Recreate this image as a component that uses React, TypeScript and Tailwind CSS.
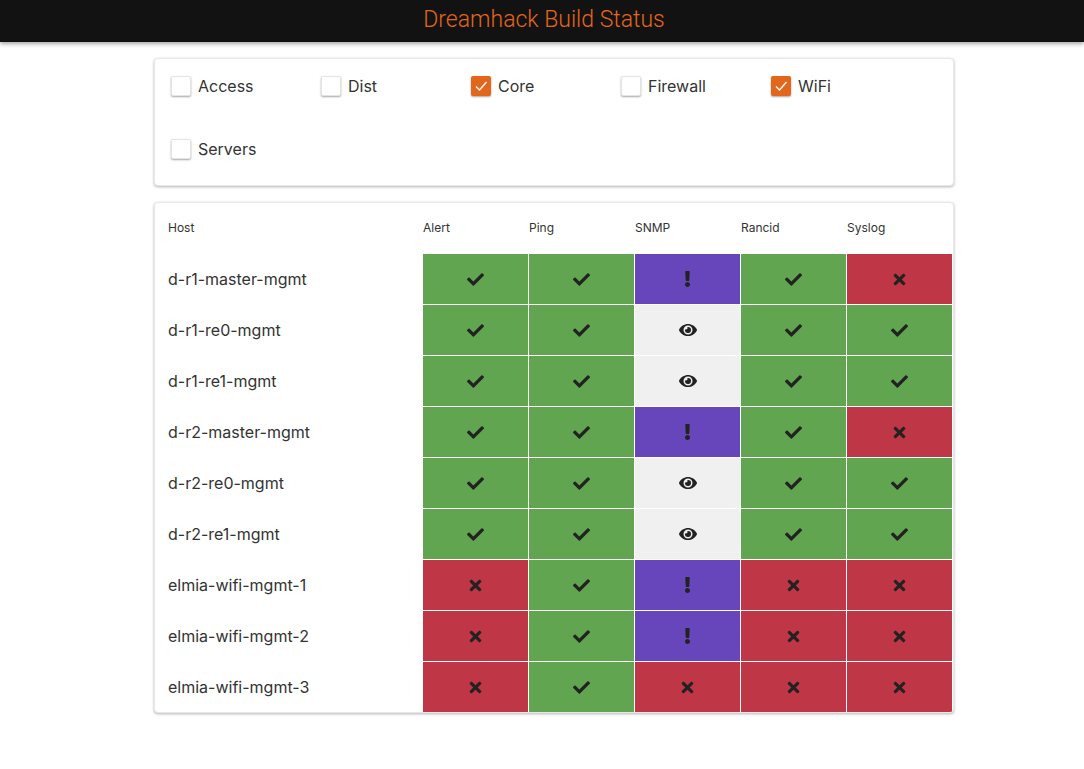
import { FaCheck, FaTimes, FaExclamation, FaEye } from 'react-icons/fa'

type Status = 'ok' | 'fail' | 'warn' | 'watch'

const hosts: { name: string; s: Status[] }[] = [
  { name: 'd-r1-master-mgmt', s: ['ok', 'ok', 'warn', 'ok', 'fail'] },
  { name: 'd-r1-re0-mgmt', s: ['ok', 'ok', 'watch', 'ok', 'ok'] },
  { name: 'd-r1-re1-mgmt', s: ['ok', 'ok', 'watch', 'ok', 'ok'] },
  { name: 'd-r2-master-mgmt', s: ['ok', 'ok', 'warn', 'ok', 'fail'] },
  { name: 'd-r2-re0-mgmt', s: ['ok', 'ok', 'watch', 'ok', 'ok'] },
  { name: 'd-r2-re1-mgmt', s: ['ok', 'ok', 'watch', 'ok', 'ok'] },
  { name: 'elmia-wifi-mgmt-1', s: ['fail', 'ok', 'warn', 'fail', 'fail'] },
  { name: 'elmia-wifi-mgmt-2', s: ['fail', 'ok', 'warn', 'fail', 'fail'] },
  { name: 'elmia-wifi-mgmt-3', s: ['fail', 'ok', 'fail', 'fail', 'fail'] },
]

const filters = [
  { label: 'Access', on: false },
  { label: 'Dist', on: false },
  { label: 'Core', on: true },
  { label: 'Firewall', on: false },
  { label: 'WiFi', on: true },
  { label: 'Servers', on: false },
]

const cellBg: Record<Status, string> = {
  ok: 'bg-[#62a550]',
  fail: 'bg-[#bf3646]',
  warn: 'bg-[#6746bb]',
  watch: 'bg-[#f0f0f0]',
}

const StatusIcon = ({ s }: { s: Status }) => {
  if (s === 'ok') return <FaCheck className="w-[17px] h-[17px] text-[#222]" />
  if (s === 'fail') return <FaTimes className="w-[17px] h-[17px] text-[#222]" />
  if (s === 'warn') return <FaExclamation className="w-[15px] h-[16px] text-[#222]" />
  return <FaEye className="w-[18px] h-[18px] text-[#222]" />
}

const Checkbox = ({ on }: { on: boolean }) => (
  <span
    className={`w-[20px] h-[20px] rounded-[2px] flex items-center justify-center shadow-[0_1px_2px_rgba(0,0,0,0.35)] ${
      on ? 'bg-[#e2661c]' : 'bg-white border border-[#e4e4e4]'
    }`}
  >
    {on && (
      <svg width="14" height="12" viewBox="0 0 14 12" fill="none">
        <path d="M2 6.5 L5.5 10 L12.5 2" stroke="white" strokeWidth="1.4" />
      </svg>
    )}
  </span>
)

export default function App() {
  return (
    <div className="min-h-screen bg-white font-['Inter',sans-serif] text-[#222]">
      {/* Header */}
      <header className="h-[42px] bg-[#121212] flex items-center justify-center shadow-[0_2px_4px_rgba(0,0,0,0.35)]">
        <h1 className="font-['Roboto',sans-serif] font-light text-[23px] text-[#e2661c] pl-[4px] -mt-[2px]">
          Dreamhack Build Status
        </h1>
      </header>

      <main className="w-[824px] mx-auto pl-[24px] pt-[16px] flex flex-col gap-[16px]">
        {/* Filters */}
        <div className="rounded-[4px] bg-white shadow-[0_1px_3px_rgba(0,0,0,0.3)] border border-[#e8e8e8] px-[16px] pt-[17px] pb-[26px]">
          <div className="grid grid-cols-[150px_150px_150px_150px_150px] gap-y-[43px]">
            {filters.map((f) => (
              <label key={f.label} className="flex items-center gap-[7px] h-[20px]">
                <Checkbox on={f.on} />
                <span className="text-[16px] text-[#333]">{f.label}</span>
              </label>
            ))}
          </div>
        </div>

        {/* Status table */}
        <div className="rounded-[4px] bg-white shadow-[0_1px_3px_rgba(0,0,0,0.3)] border border-[#e8e8e8] overflow-hidden">
          <div className="grid grid-cols-[267px_repeat(5,106px)]">
            <div className="h-[50px] flex items-center pl-[13px] text-[12px] text-[#333]">Host</div>
            {['Alert', 'Ping', 'SNMP', 'Rancid', 'Syslog'].map((h) => (
              <div key={h} className="h-[50px] flex items-center pl-[1px] text-[12px] text-[#333]">
                {h}
              </div>
            ))}
            {hosts.map((host) => (
              <div key={host.name} className="contents">
                <div className="h-[51px] flex items-center pl-[13px] text-[16px] text-[#333]">
                  {host.name}
                </div>
                {host.s.map((s, i) => (
                  <div
                    key={i}
                    className={`h-[51px] flex items-center justify-center border-t border-l border-white ${cellBg[s]}`}
                  >
                    <StatusIcon s={s} />
                  </div>
                ))}
              </div>
            ))}
          </div>
        </div>
      </main>
    </div>
  )
}
